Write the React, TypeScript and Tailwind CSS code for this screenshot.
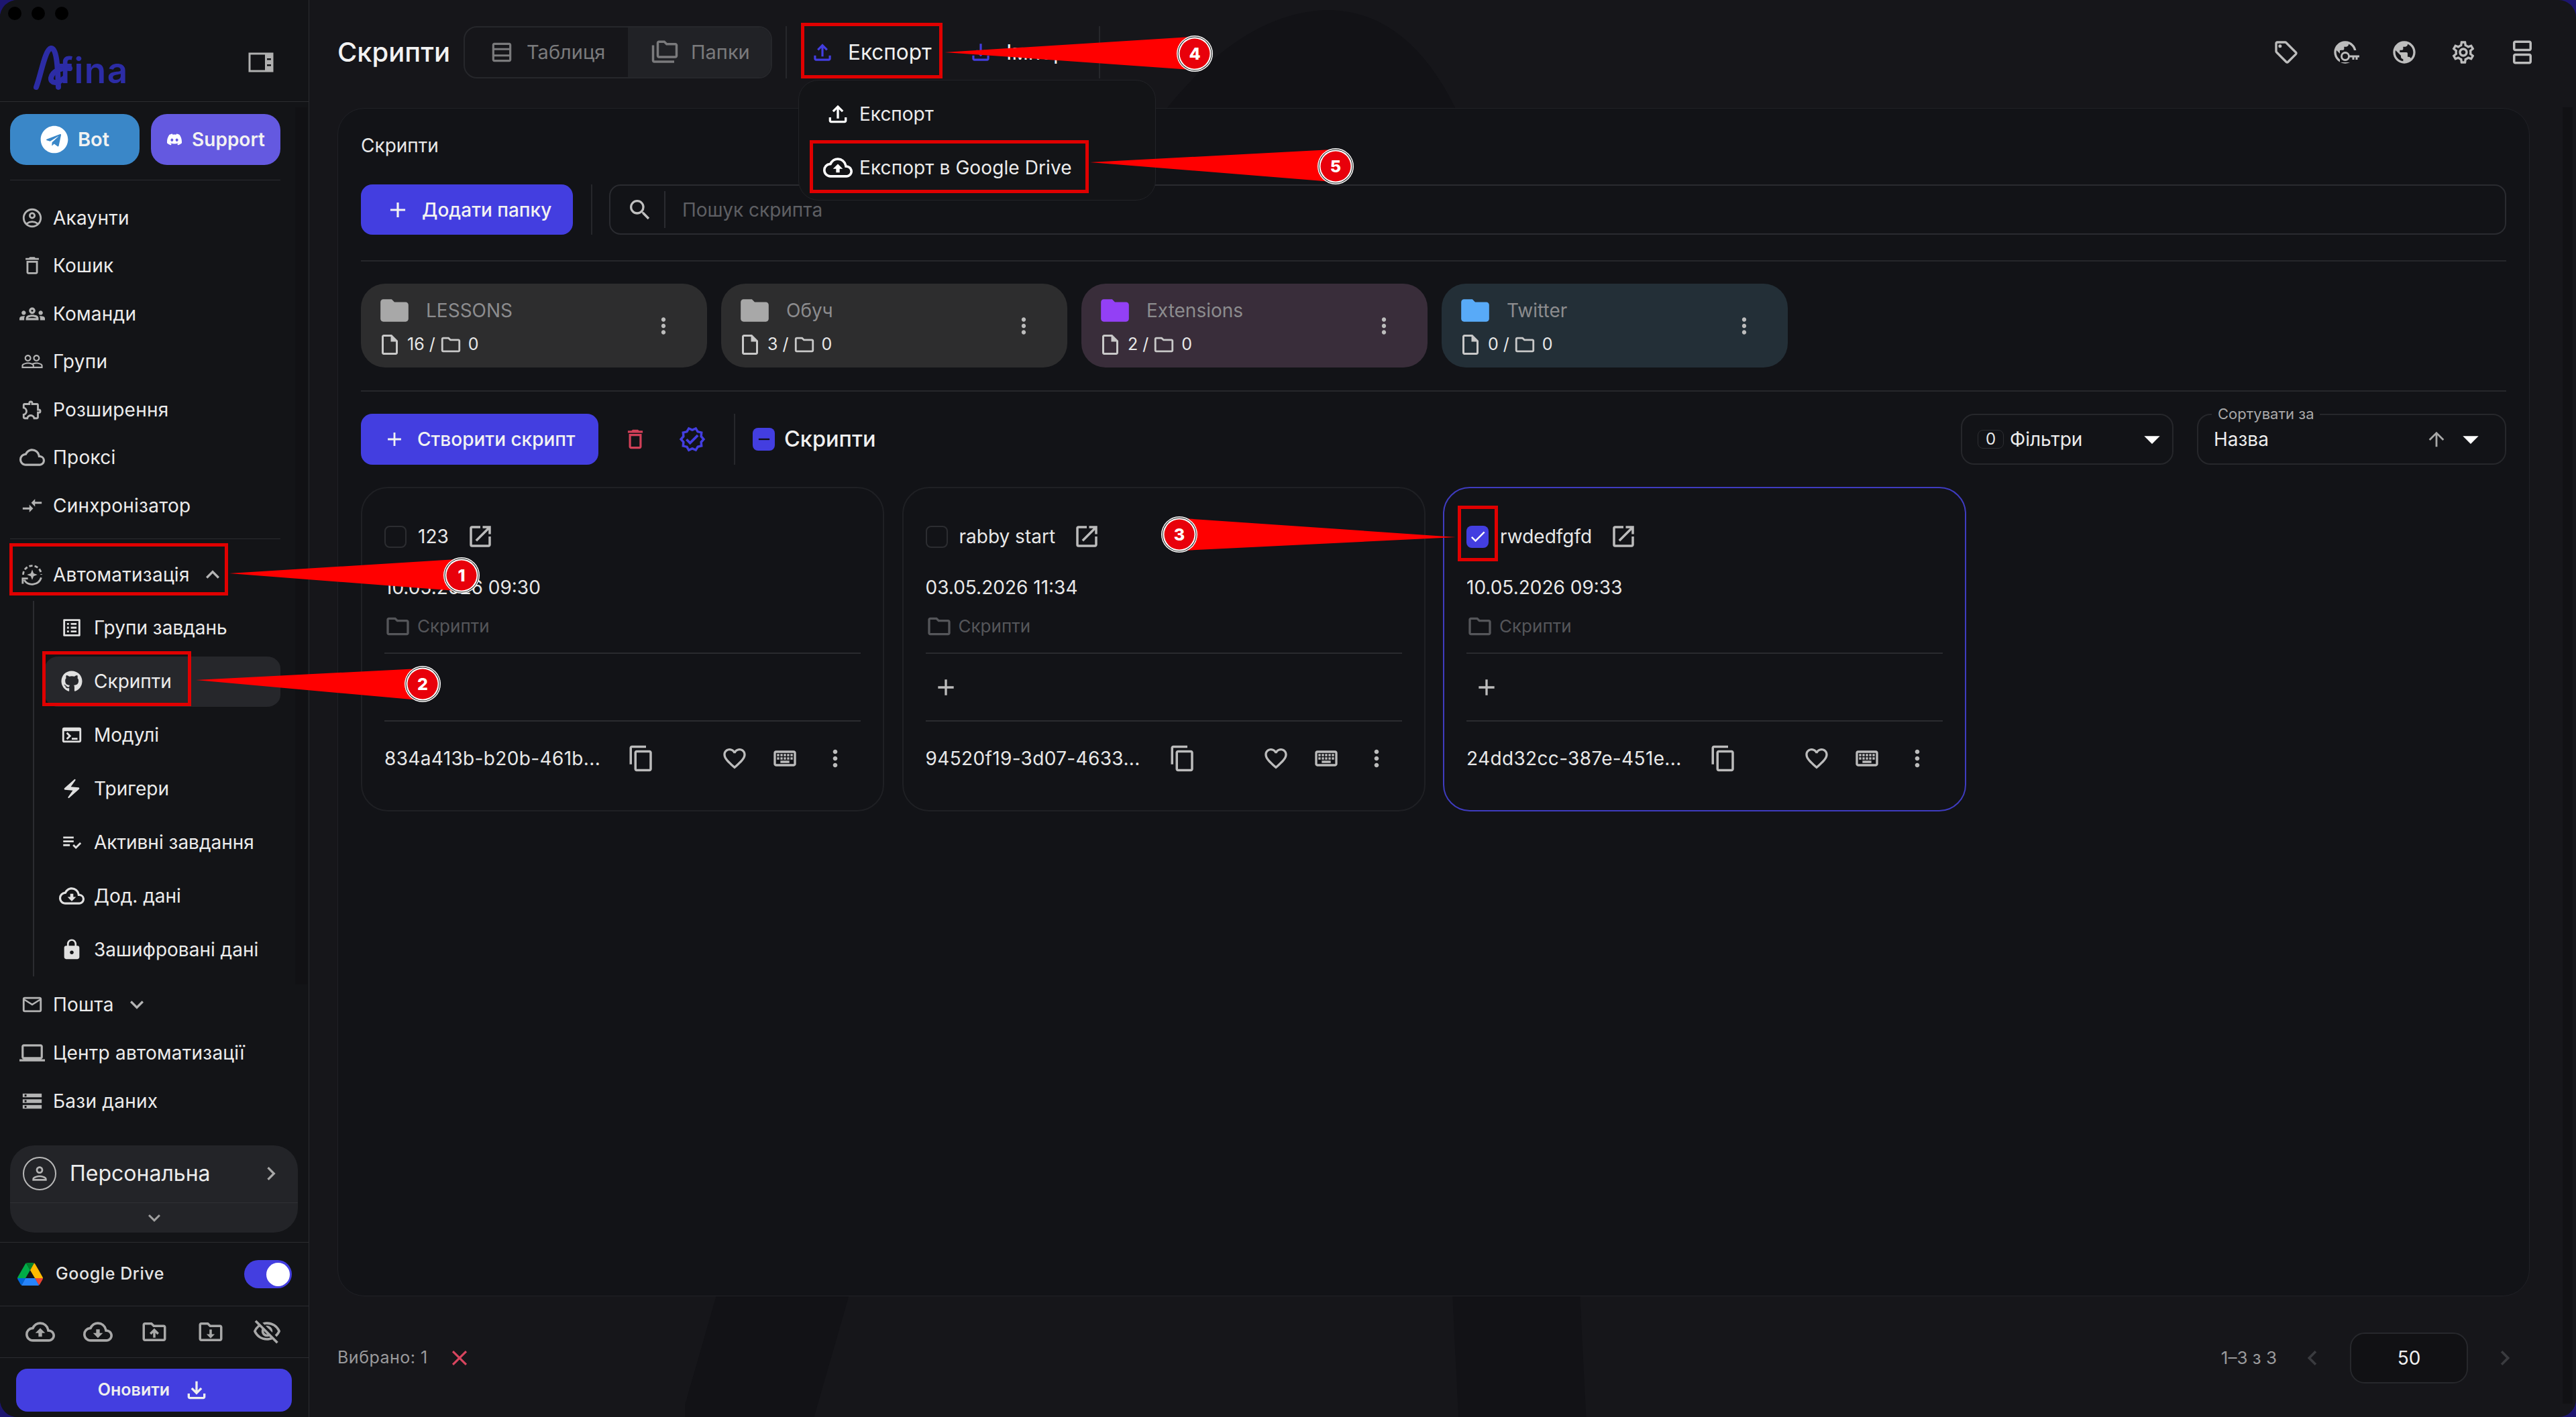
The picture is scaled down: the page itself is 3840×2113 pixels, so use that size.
import React from "react";
import {
  MdOutlineAccountCircle, MdDeleteOutline, MdOutlineGroups, MdPeopleOutline, MdOutlineExtension, MdOutlineCloud, MdCompareArrows,
  MdExpandLess, MdExpandMore, MdOutlineListAlt, MdTerminal, MdElectricBolt, MdPlaylistAddCheck, MdOutlineCloudDownload, MdOutlineCloudUpload,
  MdLock, MdMailOutline, MdOutlineLaptop, MdStorage, MdOutlinePerson, MdChevronRight, MdChevronLeft, MdOutlineDriveFolderUpload,
  MdOutlineVisibilityOff, MdOutlineFileDownload, MdOutlineFileUpload, MdOutlineTableRows, MdOutlineFolderCopy, MdSearch, MdAdd, MdFolder,
  MdOutlineInsertDriveFile, MdOutlineFolder, MdMoreVert, MdOutlineDelete, MdOutlineVerified, MdArrowUpward, MdArrowDropDown, MdOpenInNew,
  MdContentCopy, MdFavoriteBorder, MdOutlineKeyboard, MdOutlineSell, MdPublic, MdOutlineSettings, MdOutlineSplitscreen, MdClose, MdCheck, MdRemove,
} from "react-icons/md";
import { FaDiscord, FaGithub, FaTelegram } from "react-icons/fa";

function AutoIcon() {
  return (
    <svg width="34" height="34" viewBox="0 0 24 24" fill="none" stroke="#b4b4b4" strokeWidth="2">
      <path d="M2.500 12a9.500 9.500 0 0 1 19 0" strokeDasharray="3.600 2.200" />
      <path d="M21.500 15a10 10 0 0 1-18 2.500" />
      <path d="M2 21.500v-5.500h5.500" />
      <path d="M12 6.500l1.500 4 4 1.500-4 1.500-1.500 4-1.500-4-4-1.500 4-1.500z" fill="#b4b4b4" stroke="none" />
    </svg>
  );
}

function PanelIcon() {
  return (
    <svg width="38" height="30" viewBox="0 0 38 30" fill="none">
      <rect x="2" y="2" width="34" height="26" stroke="#b0b0b0" strokeWidth="3" />
      <rect x="25" y="2" width="11" height="26" fill="#b0b0b0" />
      <rect x="28" y="9" width="6" height="2.500" fill="#131417" />
      <rect x="28" y="18" width="6" height="2.500" fill="#131417" />
    </svg>
  );
}

function FolderDown() {
  return (
    <svg width="42" height="42" viewBox="0 0 24 24" fill="#a8a8a8">
      <path d="M20 6h-8l-2-2H4c-1.100 0-2 .9-2 2v12c0 1.100.9 2 2 2h16c1.100 0 2-.9 2-2V8c0-1.100-.9-2-2-2zm0 12H4V6h5.170l2 2H20v10z" />
      <path d="M11 10h2v4h2.500L12 17.500 8.500 14H11z" />
    </svg>
  );
}

function GlobeKey() {
  return (
    <div className="relative h-[40px] w-[40px]">
      <MdPublic size={40} className="text-[#bdbdbd]" />
      <svg width="32" height="18" viewBox="0 0 32 18" className="absolute left-[12px] top-[17px]">
        <rect x="0" y="0" width="32" height="18" fill="#16161a" />
        <circle cx="8" cy="9" r="5.500" fill="#16161a" stroke="#bdbdbd" strokeWidth="2.800" />
        <path d="M14 7.500h15v3h-2.500v3.500h-3v-3.500h-2v3.500h-3v-3.500H14z" fill="#bdbdbd" />
      </svg>
    </div>
  );
}

function DriveLogo() {
  return (
    <svg width="38" height="34" viewBox="0 0 87.300 78">
      <path d="m6.600 66.850 3.850 6.650c.8 1.400 1.950 2.500 3.300 3.300l13.750-23.800h-27.500c0 1.550.4 3.100 1.200 4.500z" fill="#0066da" />
      <path d="m43.650 25-13.750-23.800c-1.350.8-2.500 1.900-3.300 3.300l-25.400 44a9.060 9.060 0 0 0 -1.200 4.500h27.500z" fill="#00ac47" />
      <path d="m73.550 76.800c1.350-.8 2.500-1.900 3.300-3.300l1.600-2.750 7.650-13.250c.8-1.400 1.200-2.950 1.200-4.500h-27.502l5.852 11.500z" fill="#ea4335" />
      <path d="m43.650 25 13.750-23.800c-1.350-.8-2.900-1.200-4.500-1.200h-18.500c-1.600 0-3.150.45-4.500 1.200z" fill="#00832d" />
      <path d="m59.800 53h-32.300l-13.750 23.800c1.350.8 2.900 1.200 4.500 1.200h50.800c1.600 0 3.150-.45 4.500-1.200z" fill="#2684fc" />
      <path d="m73.400 26.500-12.700-22c-.8-1.400-1.950-2.500-3.300-3.300l-13.750 23.800 16.150 28h27.450c0-1.550-.4-3.100-1.200-4.500z" fill="#ffba00" />
    </svg>
  );
}

function Logo() {
  return (
    <div className="flex items-end">
      <svg width="62" height="66" viewBox="0 0 62 66" fill="none" stroke="#2c2ca6" strokeWidth="8" strokeLinecap="round">
        <path d="M4 62C12 40 17 6 26 4c8-1 10 24 11 58" />
        <path d="M54 34C42 32 28 38 26 48c-1 8 9 10 19 1" />
      </svg>
      <span className="-ml-[24px] mb-[-1px] text-[53px] leading-[60px] font-semibold tracking-[1.500px] text-[#2c2ca6]">fina</span>
    </div>
  );
}

const topNav = [
  { icon: <MdOutlineAccountCircle size={34} />, label: "Акаунти" },
  { icon: <MdDeleteOutline size={34} />, label: "Кошик" },
  { icon: <MdOutlineGroups size={38} />, label: "Команди" },
  { icon: <MdPeopleOutline size={34} />, label: "Групи" },
  { icon: <MdOutlineExtension size={34} />, label: "Розширення" },
  { icon: <MdOutlineCloud size={38} />, label: "Проксі" },
  { icon: <MdCompareArrows size={34} />, label: "Синхронізатор" },
];

const subNav = [
  { icon: <MdOutlineListAlt size={34} />, label: "Групи завдань" },
  { icon: <FaGithub size={32} />, label: "Скрипти", active: true },
  { icon: <MdTerminal size={34} />, label: "Модулі" },
  { icon: <MdElectricBolt size={34} />, label: "Тригери" },
  { icon: <MdPlaylistAddCheck size={34} />, label: "Активні завдання" },
  { icon: <MdOutlineCloudDownload size={38} />, label: "Дод. дані" },
  { icon: <MdLock size={34} />, label: "Зашифровані дані" },
];

function NavRow({ icon, label, h = "h-[71.500px]", extra }: { icon: React.ReactNode; label: string; h?: string; extra?: React.ReactNode }) {
  return (
    <div className={`flex items-center ${h}`}>
      <span className="flex w-[64px] shrink-0 justify-center pl-[2px] text-[#b4b4b4]">{icon}</span>
      <span className="text-[28px] leading-none tracking-[0.25px] text-[#ececec]">{label}</span>
      {extra}
    </div>
  );
}

function Sidebar() {
  return (
    <aside className="flex h-full w-[461px] shrink-0 flex-col border-r border-[#2b2c30] bg-[#131417]">
      <div className="flex h-[152px] shrink-0 items-start border-b border-[#2b2c30]">
        <div className="flex flex-1 flex-col">
          <div className="flex gap-[15px] pl-[12px] pt-[10px]">
            <span className="h-[20px] w-[20px] rounded-full bg-black" />
            <span className="h-[20px] w-[20px] rounded-full bg-black" />
            <span className="h-[20px] w-[20px] rounded-full bg-black" />
          </div>
          <div className="flex items-center pl-[50px] pr-[52px] pt-[38px]">
            <Logo />
            <span className="ml-auto -mt-[16px]"><PanelIcon /></span>
          </div>
        </div>
      </div>

      <div className="flex h-[1701px] shrink-0 border-b border-[#2b2c30]">
        <div className="w-[440px] shrink-0 pl-[15px]">
          <div className="mt-[18px] flex w-[403px] gap-[17px]">
            <div className="flex h-[76px] w-[193px] items-center justify-center gap-[14px] rounded-[24px] bg-[#3a87c8] text-[29px] font-semibold text-[#f2f2f2]">
              <FaTelegram size={42} className="text-white" />
              Bot
            </div>
            <div className="flex h-[76px] w-[193px] items-center justify-center gap-[14px] rounded-[24px] bg-[#6459e0] text-[28px] font-semibold text-[#f2f2f2]">
              <FaDiscord size={24} className="text-white" />
              Support
            </div>
          </div>
          <div className="mt-[22px] w-[403px] border-t border-[#2b2c30]" />
          <div className="mt-[20px]">
            {topNav.map((n) => (
              <NavRow key={n.label} icon={n.icon} label={n.label} />
            ))}
          </div>
          <div className="mt-[13px] w-[403px] border-t border-[#2b2c30]" />
          <div className="mt-[14px]">
            <NavRow icon={<AutoIcon />} label="Автоматизація" h="h-[78px]" extra={<MdExpandLess size={40} className="ml-[14px] text-[#b4b4b4]" />} />
          </div>
          <div className="ml-[34px] w-[369px] border-l-2 border-[#2b2c30] pl-[16px]">
            {subNav.map((n) => (
              <div key={n.label} className={`flex h-[80px] items-center ${n.active ? "rounded-[20px] bg-[#26272b] bg-clip-content py-[2.500px]" : ""}`}>
                <span className="flex w-[73px] shrink-0 justify-center pl-[6px] text-[#e0e0e0]">{n.icon}</span>
                <span className="text-[28px] leading-none text-[#ececec]">{n.label}</span>
              </div>
            ))}
          </div>
          <div className="mt-[6px]">
            <NavRow icon={<MdMailOutline size={34} />} label="Пошта" h="h-[72px]" extra={<MdExpandMore size={40} className="ml-[14px] text-[#b4b4b4]" />} />
            <NavRow icon={<MdOutlineLaptop size={38} />} label="Центр автоматизації" h="h-[72px]" />
            <NavRow icon={<MdStorage size={34} />} label="Бази даних" h="h-[72px]" />
          </div>
          <div className="mt-[30px] w-[429px] rounded-[36px] bg-[#232428]">
            <div className="flex h-[86px] items-center border-b border-[#2f3034] pl-[19px] pr-[20px]">
              <span className="flex h-[50px] w-[50px] items-center justify-center rounded-full border-2 border-[#b8b8b8] text-[#b4b4b4]"><MdOutlinePerson size={32} /></span>
              <span className="ml-[20px] text-[32px] leading-none text-[#ececec]">Персональна</span>
              <MdChevronRight size={40} className="ml-auto text-[#a8a8a8]" />
            </div>
            <div className="flex h-[44px] items-center justify-center text-[#a0a0a0]"><MdExpandMore size={36} /></div>
          </div>
        </div>
        <div className="mt-[8px] h-[1308px] w-[18px] bg-[#111114]" />
      </div>

      <div className="flex h-[95px] shrink-0 items-center border-b border-[#2b2c30] pl-[26px] pr-[25px]">
        <DriveLogo />
        <span className="ml-[19px] text-[25px] font-medium tracking-[0.6px] text-[#e4e4e4]">Google Drive</span>
        <span className="ml-auto flex h-[42px] w-[71px] items-center justify-end rounded-full bg-[#433ee0] pr-[3px]"><span className="h-[35px] w-[35px] rounded-full bg-white" /></span>
      </div>
      <div className="flex h-[77px] shrink-0 items-center justify-between border-b border-[#2b2c30] pl-[38px] pr-[40px] text-[#a8a8a8]">
        <MdOutlineCloudUpload size={44} />
        <MdOutlineCloudDownload size={44} />
        <MdOutlineDriveFolderUpload size={42} />
        <FolderDown />
        <MdOutlineVisibilityOff size={44} />
      </div>
      <div className="px-[24px] pt-[16px]">
        <div className="flex h-[64px] w-[411px] items-center justify-center gap-[20px] rounded-[17px] bg-[#433ee0] text-[25px] font-semibold text-[#eeeeee]">
          Оновити
          <MdOutlineFileDownload size={40} />
        </div>
      </div>
    </aside>
  );
}

function FolderCard({ name, files, bg, color }: { name: string; files: string; bg: string; color: string }) {
  return (
    <div className={`flex h-[125px] w-[516px] items-center rounded-[36px] pl-[25px] pr-[46px] ${bg}`}>
      <div className="flex-1">
        <div className="flex h-[50px] -translate-y-[1px] items-center">
          <MdFolder size={50} className={color} />
          <span className="ml-[22px] text-[28px] leading-none text-[#8c8c8e]">{name}</span>
        </div>
        <div className="mt-[7px] flex h-[36px] items-center text-[25px] text-[#e8e8e8]">
          <MdOutlineInsertDriveFile size={36} className="text-[#c8c8c8]" />
          <span className="ml-[8px]">{files} /</span>
          <MdOutlineFolder size={34} className="ml-[6px] text-[#c8c8c8]" />
          <span className="ml-[9px]">0</span>
        </div>
      </div>
      <MdMoreVert size={38} className="text-[#bcbcbc]" />
    </div>
  );
}

function ScriptCard({ name, date, id, selected }: { name: string; date: string; id: string; selected?: boolean }) {
  return (
    <div className={`h-[484px] w-[780px] rounded-[40px] border-2 px-[33px] pt-[55px] ${selected ? "border-[#3f3cc0]" : "border-[#1f2024]"}`}>
      <div className="flex h-[34px] items-center">
        {selected ? (
          <span className="flex h-[33px] w-[33px] items-center justify-center rounded-[8px] bg-[#433ee0]"><MdCheck size={28} className="text-white" /></span>
        ) : (
          <span className="h-[33px] w-[33px] rounded-[8px] border-2 border-[#2c2d31]" />
        )}
        <span className="ml-[17px] text-[28px] leading-none text-[#e8e8e8]">{name}</span>
        <MdOpenInNew size={42} className="ml-[26px] text-[#bcbcbc]" />
      </div>
      <div className="mt-[40px] h-[38px] text-[28px] leading-[38px] text-[#e8e8e8]">{date}</div>
      <div className="mt-[21px] flex h-[36px] items-center">
        <MdOutlineFolder size={40} className="text-[#55565a]" />
        <span className="ml-[9px] text-[26px] leading-none text-[#55565a]">Скрипти</span>
      </div>
      <div className="mt-[21px] border-t-2 border-[#2a2b2f]" />
      <div className="flex h-[99px] items-center pl-[10px]"><MdAdd size={40} className="text-[#bcbcbc]" /></div>
      <div className="border-t-2 border-[#2a2b2f]" />
      <div className="mt-[35px] flex h-[40px] items-center">
        <span className="w-[340px] text-[28px] leading-none tracking-[0.35px] text-[#e8e8e8]">{id}</span>
        <MdContentCopy size={42} className="ml-[22px] text-[#bcbcbc]" />
        <MdFavoriteBorder size={40} className="ml-[98px] text-[#bcbcbc]" />
        <MdOutlineKeyboard size={40} className="ml-[35px] text-[#bcbcbc]" />
        <MdMoreVert size={40} className="ml-[35px] text-[#bcbcbc]" />
      </div>
    </div>
  );
}

function Header() {
  return (
    <div className="flex h-[161px] shrink-0 items-start pt-[39px] pr-[16px]">
      <h1 className="flex h-[78px] w-[169px] items-center text-[40px] font-medium whitespace-nowrap text-[#f2f2f2]">Скрипти</h1>
      <div className="ml-[19px] flex h-[78px] w-[460px] overflow-hidden rounded-[20px] border-2 border-[#26272b] text-[29px] text-[#7a7a7c]">
        <div className="flex w-[243px] items-center pl-[36px]">
          <MdOutlineTableRows size={38} />
          <span className="ml-[18px]">Таблиця</span>
        </div>
        <div className="flex flex-1 items-center bg-[#212226] pl-[34px]">
          <MdOutlineFolderCopy size={42} />
          <span className="ml-[18px]">Папки</span>
        </div>
      </div>
      <div className="ml-[20px] h-[78px] border-l-2 border-[#26272b]" />
      <div className="ml-[21px] flex h-[78px] w-[211px] items-center pl-[13px] text-[31.500px] text-[#f0f0f0]">
        <MdOutlineFileUpload size={38} className="text-[#433ee0]" />
        <span className="ml-[19px]">Експорт</span>
      </div>
      <div className="flex h-[78px] w-[233px] items-center pl-[38px] text-[31.500px] text-[#f0f0f0]">
        <MdOutlineFileDownload size={38} className="text-[#433ee0]" />
        <span className="ml-[19px]">Імпорт</span>
      </div>
      <div className="h-[78px] border-l-2 border-[#26272b]" />
      <div className="ml-auto flex h-[78px] items-center text-[#bdbdbd]">
        <span className="flex w-[88px] justify-center"><MdOutlineSell size={40} /></span>
        <span className="flex w-[88px] justify-center"><GlobeKey /></span>
        <span className="flex w-[88px] justify-center"><MdPublic size={40} /></span>
        <span className="flex w-[88px] justify-center"><MdOutlineSettings size={40} /></span>
        <span className="flex w-[88px] justify-center"><MdOutlineSplitscreen size={42} /></span>
      </div>
    </div>
  );
}

function Panel() {
  return (
    <section className="mr-[49px] h-[1772px] shrink-0 rounded-[40px] border border-[#202126] bg-[#121317] px-[34px] pt-[36px]">
      <div className="h-[38px] text-[28px] leading-[38px] text-[#e8e8e8]">Скрипти</div>
      <div className="mt-[39px] flex h-[75px] items-stretch">
        <button className="flex w-[316px] items-center rounded-[17px] bg-[#433ee0] pl-[36px] text-[28px] font-medium text-[#f2f2f2]">
          <MdAdd size={38} />
          <span className="ml-[17px]">Додати папку</span>
        </button>
        <div className="ml-[27px] border-l-2 border-[#26272b]" />
        <div className="ml-[25px] flex flex-1 items-center rounded-[17px] border-2 border-[#2a2b30] pl-[24px]">
          <MdSearch size={40} className="text-[#c0c0c0]" />
          <span className="ml-[16px] h-[55px] border-l-2 border-[#2a2b30]" />
          <span className="ml-[25px] text-[28px] text-[#5e5f63]">Пошук скрипта</span>
        </div>
      </div>
      <div className="mt-[38px] border-t-2 border-[#26272b]" />
      <div className="mt-[33px] flex gap-[21px]">
        <FolderCard name="LESSONS" files="16" bg="bg-[#2d2d2e]" color="text-[#a8a8a8]" />
        <FolderCard name="Обуч" files="3" bg="bg-[#2d2d2e]" color="text-[#a8a8a8]" />
        <FolderCard name="Extensions" files="2" bg="bg-[#392d3a]" color="text-[#9340f5]" />
        <FolderCard name="Twitter" files="0" bg="bg-[#232f37]" color="text-[#58aaf8]" />
      </div>
      <div className="mt-[34px] border-t-2 border-[#26272b]" />
      <div className="mt-[33px] flex h-[76px] items-stretch">
        <button className="flex w-[354px] items-center rounded-[17px] bg-[#433ee0] pl-[33px] text-[28px] font-medium text-[#f2f2f2]">
          <MdAdd size={34} />
          <span className="ml-[17px]">Створити скрипт</span>
        </button>
        <span className="ml-[36px] flex items-center"><MdOutlineDelete size={38} className="text-[#d24058]" /></span>
        <span className="ml-[45px] flex items-center"><MdOutlineVerified size={42} className="text-[#433ee0]" /></span>
        <div className="ml-[41px] border-l-2 border-[#26272b]" />
        <span className="ml-[26px] flex items-center"><span className="flex h-[34px] w-[33px] items-center justify-center rounded-[8px] bg-[#433ee0]"><MdRemove size={28} className="text-[#111]" /></span></span>
        <span className="ml-[14px] flex items-center text-[32.500px] font-medium text-[#f0f0f0]">Скрипти</span>
        <div className="ml-auto flex w-[317px] items-center rounded-[20px] border-2 border-[#26272b] pl-[23px] pr-[2px]">
          <span className="flex h-[28px] w-[39px] items-center justify-center rounded-[8px] border border-[#2c2d31] text-[24px] text-[#e8e8e8]">0</span>
          <span className="ml-[9px] text-[28px] text-[#ececec]">Фільтри</span>
          <MdArrowDropDown size={56} className="ml-auto text-white" />
        </div>
        <div className="relative ml-[35px] flex w-[461px] items-center rounded-[20px] border-2 border-[#26272b] pl-[23px] pr-[23px]">
          <span className="absolute -top-[16px] left-[20px] bg-[#121317] px-[9px] text-[22px] leading-[28px] text-[#a8a8a8]">Сортувати за</span>
          <span className="text-[28px] text-[#ececec]">Назва</span>
          <MdArrowUpward size={34} className="ml-auto text-[#a8a8a8]" />
          <MdArrowDropDown size={56} className="ml-[6px] text-white" />
        </div>
      </div>
      <div className="mt-[33px] flex gap-[26.500px]">
        <ScriptCard name="123" date="10.05.2026 09:30" id="834a413b-b20b-461b..." />
        <ScriptCard name="rabby start" date="03.05.2026 11:34" id="94520f19-3d07-4633..." />
        <ScriptCard name="rwdedfgfd" date="10.05.2026 09:33" id="24dd32cc-387e-451e..." selected />
      </div>
    </section>
  );
}

function Footer() {
  return (
    <div className="flex flex-1 items-center pr-[64px] pt-[3px]">
      <span className="text-[25px] tracking-[0.5px] text-[#9a9a9c]">Вибрано: 1</span>
      <MdClose size={38} className="ml-[28px] text-[#d8455f]" />
      <span className="ml-auto text-[26px] text-[#9a9a9c]">1–3 з 3</span>
      <MdChevronLeft size={44} className="ml-[31px] text-[#3a3b3f]" />
      <div className="ml-[34px] flex h-[76px] w-[176px] items-center justify-center rounded-[22px] border-2 border-[#27282c] bg-[#111114] text-[28px] text-[#f0f0f0]">50</div>
      <MdChevronRight size={44} className="ml-[33px] text-[#3a3b3f]" />
    </div>
  );
}

function Arrow({ tip, base, c, n }: { tip: [number, number]; base: [number, number, number]; c: [number, number]; n: number }) {
  return (
    <g>
      <polygon points={`${tip[0]},${tip[1]} ${base[0]},${base[1]} ${base[0]},${base[2]}`} fill="#ff0000" />
      <circle cx={c[0]} cy={c[1]} r="27" fill="#ffffff" />
      <circle cx={c[0]} cy={c[1]} r="25.500" fill="#111111" />
      <circle cx={c[0]} cy={c[1]} r="24.500" fill="#ffffff" />
      <circle cx={c[0]} cy={c[1]} r="22.500" fill="#e8000b" />
      <text x={c[0]} y={c[1] + 9} textAnchor="middle" fontSize="25" fontWeight="800" fill="#ffffff">{n}</text>
    </g>
  );
}

function Annotations() {
  return (
    <>
      <svg width="3840" height="2113" viewBox="0 0 3840 2113" className="pointer-events-none absolute left-0 top-0">
        <Arrow tip={[342, 855]} base={[680, 834, 881]} c={[688, 858]} n={1} />
        <Arrow tip={[292, 1014]} base={[625, 997, 1044]} c={[630, 1020]} n={2} />
        <Arrow tip={[2170, 801]} base={[1765, 773, 821]} c={[1758, 797]} n={3} />
        <Arrow tip={[1408, 78]} base={[1775, 55, 104]} c={[1781, 80]} n={4} />
        <Arrow tip={[1625, 242]} base={[1985, 223, 271]} c={[1991, 248]} n={5} />
      </svg>
      <div className="pointer-events-none absolute left-[14px] top-[810px] h-[78px] w-[326px] border-[5px] border-[#e00000]" />
      <div className="pointer-events-none absolute left-[63px] top-[971px] h-[82px] w-[222px] border-[5px] border-[#e00000]" />
      <div className="pointer-events-none absolute left-[1194px] top-[34px] h-[83px] w-[211px] border-[5px] border-[#e00000]" />
      <div className="pointer-events-none absolute left-[1207px] top-[209px] h-[79px] w-[416px] border-[5px] border-[#e00000]" />
      <div className="pointer-events-none absolute left-[2173px] top-[754px] h-[83px] w-[60px] border-[5px] border-[#e00000]" />
    </>
  );
}

function ExportMenu() {
  return (
    <div className="absolute left-[1190px] top-[119px] h-[180px] w-[533px] rounded-[30px] border border-[#222327] bg-[#131417] pt-[10px] text-[28px] text-[#ececec]">
      <div className="flex h-[80px] items-center pl-[38px]">
        <MdOutlineFileUpload size={40} className="text-white" />
        <span className="ml-[12px]">Експорт</span>
      </div>
      <div className="flex h-[80px] items-center pl-[36px]">
        <MdOutlineCloudUpload size={44} className="text-white" />
        <span className="ml-[10px] tracking-[0.1px]">Експорт в Google Drive</span>
      </div>
    </div>
  );
}

export default function App() {
  return (
    <div className="relative h-[2113px] w-[3840px] overflow-hidden bg-[#1d1670] [font-family:Inter,'Noto_Sans',sans-serif]">
      <div className="relative flex h-full w-full overflow-hidden rounded-[26px] bg-[#16161a]">
        <Sidebar />
        <main className="relative flex h-full flex-1">
          <svg width="1400" height="2113" viewBox="0 0 1400 2113" fill="none" className="absolute left-[560px] top-0" stroke="#121216" strokeWidth="190">
            <path d="M40 2300C300 1400 640 120 960 110c260 10 240 1300 300 2200" />
          </svg>
          <div className="relative flex w-[3359px] shrink-0 flex-col pl-[42px]">
            <Header />
            <Panel />
            <Footer />
          </div>
          <div className="relative mb-[20px] mt-[160px] w-[15px] bg-[#111114]" />
        </main>
      </div>
      <ExportMenu />
      <Annotations />
    </div>
  );
}
